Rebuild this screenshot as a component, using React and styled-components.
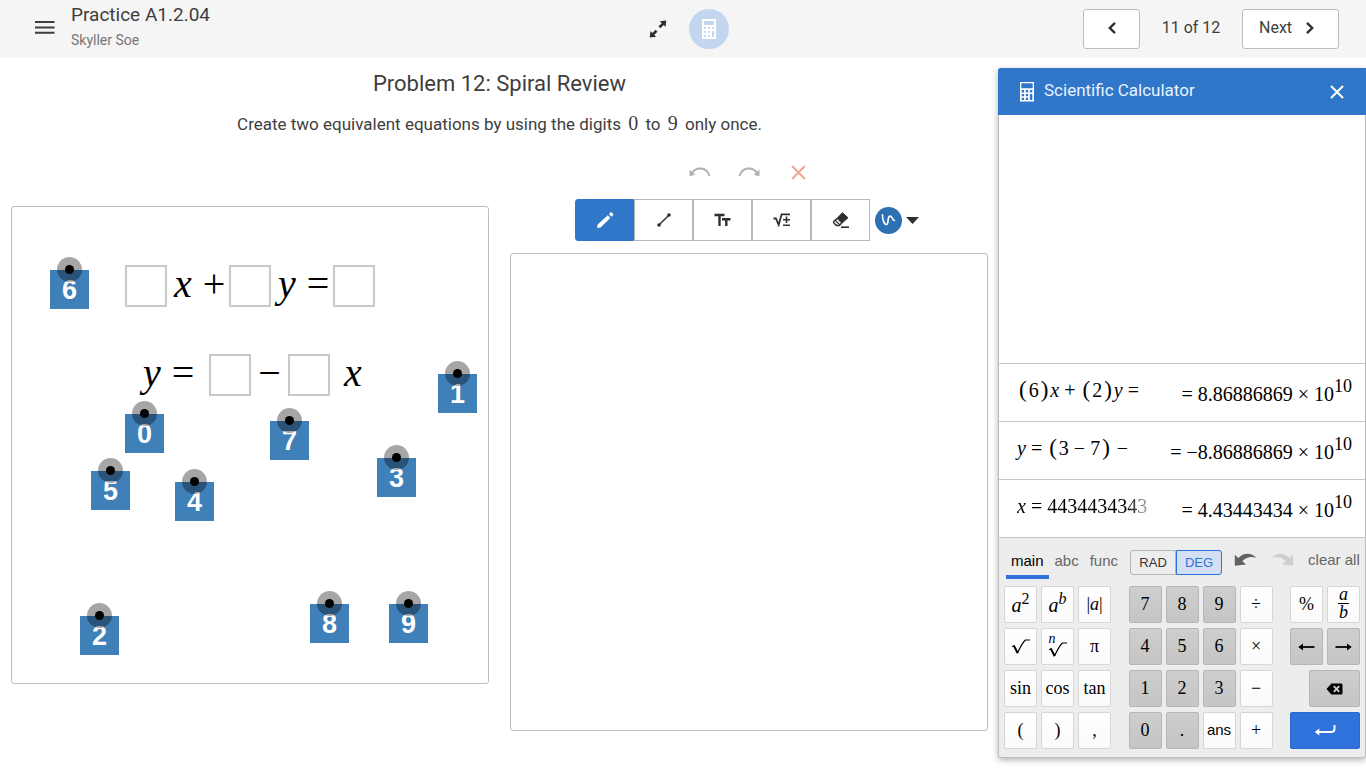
import React, { useState } from "react";
import styled, { createGlobalStyle, css } from "styled-components";

const GlobalStyle = createGlobalStyle`
  *, *::before, *::after { box-sizing: border-box; }
  body {
    margin: 0;
    background: #fff;
    color: #3e3e3e;
    font-family: Roboto, "Liberation Sans", sans-serif;
  }
  button { font: inherit; color: inherit; padding: 0; border: 0; background: none; cursor: pointer; }
  h1, h2, p { margin: 0; font-weight: 400; }
  svg { display: block; flex: none; overflow: visible; }
`;

const serif = `"Liberation Serif", serif`;
const sans = `"Liberation Sans", sans-serif`;

/* ---------- page frame ---------- */

const Page = styled.div`
  min-height: 100vh;
  display: flex;
  flex-direction: column;
`;

const TopBar = styled.header`
  display: grid;
  grid-template-columns: 1fr auto 1fr;
  align-items: center;
  height: 58px;
  padding: 0 24px 0 35px;
  background: #f5f5f5;
`;

const TopLeft = styled.div`
  display: flex;
  align-items: center;
  gap: 16px;
  height: 54px;
`;

const MenuButton = styled.button`
  padding-bottom: 3px;
`;

const Titles = styled.div`
  height: 54px;
  display: flex;
  flex-direction: column;
  gap: 4px;
  padding-top: 1px;
`;

const ActivityTitle = styled.h1`
  font-size: 19px;
  line-height: 24px;
`;

const StudentName = styled.p`
  font-size: 14px;
  line-height: 18px;
  color: #757575;
`;

const TopCenter = styled.div`
  display: flex;
  align-items: center;
  gap: 22px;
`;

const CalcToggle = styled.button`
  width: 40px;
  height: 40px;
  border-radius: 50%;
  background: #c2d6f0;
  color: #fff;
  display: grid;
  place-items: center;
`;

const Pager = styled.nav`
  display: flex;
  justify-content: flex-end;
  align-items: center;
  padding-right: 3px;
  font-size: 16px;
`;

const PageButton = styled.button`
  height: 40px;
  padding: 0 ${(p) => (p.$wide ? 24 : 0)}px 3px ${(p) => (p.$wide ? 16 : 0)}px;
  width: ${(p) => (p.$wide ? 97 : 57)}px;
  display: flex;
  align-items: center;
  justify-content: ${(p) => (p.$wide ? "space-between" : "center")};
  border: 1px solid #bdbdbd;
  border-radius: 3px;
  background: #fff;
`;

const PageCount = styled.span`
  width: 102px;
  padding-bottom: 3px;
  text-align: center;
`;

const Body = styled.div`
  flex: 1;
  display: flex;
`;

/* ---------- problem ---------- */

const Problem = styled.main`
  flex: 1;
  min-width: 0;
  padding: 14px 10px 16px 11px;
`;

const ProblemTitle = styled.h2`
  font-size: 22px;
  line-height: 24px;
  text-align: center;
`;

const Prompt = styled.p`
  margin-top: 16px;
  font-size: 17px;
  line-height: 24px;
  text-align: center;
`;

const MathDigit = styled.span`
  font-family: ${serif};
  font-size: 20px;
  line-height: 20px;
  margin: 0 3px;
`;

const Workspace = styled.div`
  display: grid;
  grid-template-columns: 1fr 1fr;
  gap: 21px;
  margin-top: 24px;
  align-items: start;
`;

const GraphColumn = styled.div`
  padding-top: 46px;
`;

const Board = styled.div`
  position: relative;
  aspect-ratio: 1;
  border: 1px solid #bdbdbd;
  border-radius: 3px;
  background: #fff;
`;

const HistoryBar = styled.div`
  display: flex;
  justify-content: center;
  gap: 25px;
  height: 24px;
`;

const PlainIconButton = styled.button`
  width: 24px;
  height: 24px;
  display: grid;
  place-items: center;
`;

const ToolBar = styled.div`
  display: flex;
  justify-content: center;
  margin: 15px 0 12px;
`;

const Tool = styled.button`
  width: 59px;
  height: 42px;
  display: grid;
  place-items: center;
  color: ${(p) => (p.$active ? "#fff" : "#2f2f2f")};
  background: ${(p) => (p.$active ? "#3077c9" : "#fff")};
  border: 1px solid ${(p) => (p.$active ? "#3077c9" : "#b8b8b8")};
  border-radius: ${(p) => (p.$active ? "3px 0 0 3px" : "0")};
`;

const ColorPicker = styled.button`
  display: flex;
  align-items: center;
  gap: 4px;
  padding: 0 4px 0 5px;
`;

const Tile = styled.button`
  position: absolute;
  left: ${(p) => p.$x}px;
  top: ${(p) => p.$y}px;
  width: 39px;
  height: 39px;
  background: #4080b8;
  color: #fff;
  font: bold 27px/40px ${sans};
  text-align: center;
  &::before, &::after {
    content: "";
    position: absolute;
    border-radius: 50%;
  }
  &::before {
    left: 7px;
    top: -13px;
    width: 25px;
    height: 25px;
    background: rgba(0, 0, 0, 0.35);
  }
  &::after {
    left: 15px;
    top: -5px;
    width: 9px;
    height: 9px;
    background: #000;
  }
`;

const Equation = styled.div`
  position: absolute;
  left: ${(p) => p.$x}px;
  top: ${(p) => p.$y}px;
  display: flex;
  align-items: center;
  height: 42px;
  font: 40px/36px ${serif};
  color: #000;
`;

const Blank = styled.span`
  width: 42px;
  height: 42px;
  border: 2px solid #c8c8c8;
`;

const Term = styled.span`
  width: ${(p) => p.$w}px;
  padding-bottom: 4px;
  text-align: center;
  font-style: ${(p) => (p.$op ? "normal" : "italic")};
`;

/* ---------- calculator ---------- */

const Calculator = styled.aside`
  width: 368px;
  margin: 10px 0 10px;
  display: flex;
  flex-direction: column;
  border: 1px solid #bdbdbd;
  border-top: 0;
  border-radius: 3px;
  background: #ededed;
  box-shadow: 0 2px 6px rgba(0, 0, 0, 0.3);
  color: #000;
`;

const CalcHeader = styled.div`
  display: flex;
  align-items: center;
  gap: 10px;
  height: 47px;
  margin: 0 -1px;
  padding: 0 22px 0 22px;
  border-radius: 3px 0 0 0;
  background: #3077c9;
  color: #fff;
`;

const CalcTitle = styled.h2`
  flex: 1;
  padding-bottom: 3px;
  font-size: 17px;
  line-height: 20px;
  color: #e8f2ff;
`;

const Tape = styled.div`
  flex: 1;
  display: flex;
  flex-direction: column;
  justify-content: flex-end;
  background: #fff;
`;

const TapeRow = styled.div`
  display: flex;
  justify-content: space-between;
  height: 58px;
  padding: 0 13px 0 18px;
  border-top: 1px solid #c6c6c6;
  font: 20px/24px ${serif};
  white-space: nowrap;
`;

const Expression = styled.div`
  padding-top: 14px;
  display: flex;
  ${(p) =>
    p.$fade &&
    css`
      color: transparent;
      background: linear-gradient(to right, #000 85%, #aaa 100%);
      background-clip: text;
    `}
`;

const Result = styled.div`
  padding-top: 18px;
  display: flex;
`;

const Op = styled.span`
  margin: 0 5px;
`;

const Power = styled.sup`
  font-size: 18px;
  line-height: 20px;
  margin-top: -6px;
`;

const Paren = styled.span`
  font-size: 23px;
  margin: 0 2px;
`;

const Keypad = styled.div`
  border-top: 1px solid #c6c6c6;
  padding: 12px 5px 8px;
  font-family: ${sans};
`;

const Controls = styled.div`
  display: flex;
  align-items: center;
  height: 29px;
  margin-bottom: 7px;
  padding: 0 2px;
  font-size: 15px;
  line-height: 22px;
  color: #666;
  white-space: nowrap;
`;

const Tab = styled.button`
  height: 29px;
  padding: 0 5px 9px;
  margin-right: 1px;
  ${(p) =>
    p.$active &&
    css`
      color: #000;
      box-shadow: inset 0 -4px #2f72dc;
    `}
`;

const AngleSwitch = styled.div`
  display: flex;
  align-self: flex-start;
  margin: 0 12px 0 6px;
`;

const AngleButton = styled.button`
  width: 46px;
  height: 25px;
  font-size: 13px;
  color: ${(p) => (p.$active ? "#2f72dc" : "#333")};
  background: ${(p) => (p.$active ? "#d3dff3" : "transparent")};
  border: 1px solid ${(p) => (p.$active ? "#2f72dc" : "#b5b5b5")};
  border-radius: ${(p) => (p.$active ? "0 3px 3px 0" : "3px 0 0 3px")};
`;

const CalcIconButton = styled.button`
  margin-right: 14px;
  padding-bottom: 9px;
`;

const ClearAll = styled.button`
  margin-left: auto;
  padding-bottom: 9px;
`;

const Keys = styled.div`
  display: flex;
  justify-content: space-between;
`;

const KeyGroup = styled.div`
  display: grid;
  grid-template-columns: repeat(${(p) => p.$cols}, 33px);
  grid-auto-rows: 37px;
  gap: 5px 4px;
`;

const Key = styled.button`
  display: flex;
  align-items: center;
  justify-content: center;
  padding-bottom: 2px;
  border: 1px solid #d6d6d6;
  border-radius: 2px;
  background: linear-gradient(#fff, #fafafa);
  color: #000;
  font: ${(p) => (p.$italic ? "italic" : "normal")} 18px/24px ${serif};
  ${(p) =>
    p.$icon &&
    css`
      padding-bottom: 0;
    `}
  ${(p) =>
    p.$label &&
    css`
      font-family: ${sans};
      font-size: 15px;
    `}
  ${(p) =>
    p.$dark &&
    css`
      background: linear-gradient(#cecece, #c5c5c5);
      border-color: #b6b6b6;
    `}
  ${(p) =>
    p.$wide &&
    css`
      grid-column: span 2;
      justify-self: end;
      width: 51px;
    `}
  ${(p) =>
    p.$enter &&
    css`
      grid-column: span 2;
      background: #2f72dc;
      border-color: #2a68cc;
      color: #fff;
    `}
`;

const KeyBase = styled.span`
  font-size: 20px;
  margin-top: 3px;
`;

const KeyPower = styled.sup`
  font-size: 16px;
  line-height: 16px;
  margin-top: -10px;
  font-style: ${(p) => (p.$upright ? "normal" : "italic")};
`;

const Bar = styled.span`
  font-style: normal;
`;

const Fraction = styled.span`
  display: flex;
  flex-direction: column;
  align-items: center;
  width: 11px;
  line-height: 16px;
`;

const Numerator = styled.span`
  width: 11px;
  border-bottom: 1px solid #000;
  line-height: 14px;
  padding-bottom: 2px;
`;

/* ---------- icons ---------- */

const MenuIcon = () => (
  <svg width="20" height="14" viewBox="0 0 20 14" stroke="#3e3e3e" strokeWidth="2">
    <path d="M0 1h19.5M0 6.400h19.5M0 11.800h19.5" />
  </svg>
);

const ExpandIcon = () => (
  <svg width="18" height="18" viewBox="0 0 18 18" fill="#2f2f2f">
    <path d="M17.300.4 10.800 1.200l2 2-3.300 3 1.800 2 3.400-3.200 1.800 1.900zM.7 17.600l6.500-.8-2-2 3.300-3-1.800-2-3.400 3.200-1.800-1.900z" />
  </svg>
);

const CalculatorIcon = ({ solid }) => (
  <svg width="14" height="20" viewBox="0 0 14 20" fill="currentColor" fillRule="evenodd">
    {solid ? (
      <path d="M0 0h14v20H0zM2 2v4h10V2zM2 8v1.800h2V8zM6 8v1.800h2V8zM10 8v1.800h2V8zM2 12v1.800h2V12zM6 12v1.800h2V12zM10 12v6h2v-6zM2 16v1.800h2V16zM6 16v1.800h2V16z" />
    ) : (
      <path d="M0 0h14v19.500H0zM1.300 1.300v4.900h11.400V1.300zM1.700 8v2.400h2.400V8zM5.800 8v2.400h2.400V8zM9.900 8v2.400h2.400V8zM1.700 11.900v2.400h2.400v-2.400zM5.800 11.900v2.400h2.400v-2.400zM9.900 11.900v6.100h2.400v-6.100zM1.700 15.700v2.300h2.400v-2.300zM5.800 15.700v2.300h2.400v-2.300z" />
    )}
  </svg>
);

const Chevron = ({ left }) => (
  <svg width="8" height="12" viewBox="0 0 8 12" fill="none" stroke="#2f2f2f" strokeWidth="2.400">
    <path d={left ? "M7 .8 1.800 6 7 11.200" : "M1 .8 6.200 6 1 11.200"} />
  </svg>
);

const CrossIcon = ({ size, color, weight }) => (
  <svg width={size} height={size} viewBox="0 0 14 14" stroke={color} strokeWidth={weight}>
    <path d="M1 1l12 12M13 1 1 13" />
  </svg>
);

const ArcArrow = ({ forward }) => (
  <svg width="22" height="10" viewBox="0 0 22 10">
    <g transform={forward ? "translate(22 0) scale(-1 1)" : undefined}>
      <path d="M2.800 6C7.500-.6 17.500-.4 20.500 9" fill="none" stroke="#b0b0b0" strokeWidth="2" />
      <path d="M.4 2.800 6.300 7.800.6 9.200z" fill="#b0b0b0" />
    </g>
  </svg>
);

const PencilIcon = () => (
  <svg width="18" height="18" viewBox="0 0 18 18" fill="currentColor">
    <path d="M1.200 17 1.500 13.700 11.800 4.200l2.500 2.800-9.700 9.500zM12.900 3.100l1.600-1.500c.5-.4 1-.4 1.400 0l1.100 1.200c.4.4.4 1 0 1.400l-1.500 1.500z" />
  </svg>
);

const LineIcon = () => (
  <svg width="14" height="14" viewBox="0 0 14 14" fill="currentColor">
    <path d="M2 12 12 2" stroke="currentColor" strokeWidth="1.500" />
    <circle cx="2" cy="12" r="1.800" />
    <circle cx="12" cy="2" r="1.800" />
  </svg>
);

const TextIcon = () => (
  <svg width="17" height="14" viewBox="0 0 17 14" fill="none" stroke="currentColor" strokeWidth="2.400">
    <path d="M.5 2h10M5.500 2v11M8 6.200h8.500M12.300 6.200V13" />
  </svg>
);

const RootIcon = () => (
  <svg width="18" height="14" viewBox="0 0 18 14" fill="none" stroke="currentColor">
    <path d="M.5 5.500h2.400l2.800 6.300L8.600 1.300h8.400" strokeWidth="1.800" />
    <path d="M10 6.700h7M13.500 3.400v6.500M10 12.200h7" strokeWidth="1.600" />
  </svg>
);

const EraserIcon = () => (
  <svg width="18" height="18" viewBox="0 0 18 18" fill="none" stroke="currentColor">
    <path d="M10.500 1.700 16 6.800 9.800 12.300 5 7.300z" fill="currentColor" />
    <path d="M5 7.600 2.200 10c-.8.700-.8 1.500-.1 2.200l2.300 2.200h2.800l2.400-2.200" strokeWidth="1.500" />
    <path d="M3.500 9.500 7.500 13.600" strokeWidth="1.300" />
    <path d="M9 16.200h8" strokeWidth="1.600" />
  </svg>
);

const SquiggleIcon = () => (
  <svg width="27" height="27" viewBox="0 0 27 27">
    <circle cx="13.500" cy="13.500" r="13.500" fill="#2d70b3" />
    <path d="M7.500 7.800c-.2 4 1.500 9.700 4 9.700 2.600 0 .3-7.200 3.200-8.300 2.800-1 2.600 4.600 4.800 4.300" fill="none" stroke="#fff" strokeWidth="1.600" strokeLinecap="round" />
  </svg>
);

const CaretIcon = () => (
  <svg width="13" height="7" viewBox="0 0 13 7" fill="#2f2f2f">
    <path d="M0 0h13L6.500 7z" />
  </svg>
);

const CurveArrow = ({ forward }) => (
  <svg width="23" height="14" viewBox="0 0 23 14" fill={forward ? "#cfcfcf" : "#626262"}>
    <path
      transform={forward ? "translate(23 0) scale(-1 1)" : undefined}
      d="M.8 1.800.8 12.700 12 11.600 8.300 8.300C11.200 4.700 16.500 2.700 22.300 4.700 17.300-.8 9.200-.4 4.300 5z"
    />
  </svg>
);

const SqrtIcon = ({ nth }) => (
  <svg width="24" height="24" viewBox="0 0 24 24" fill="none" stroke="#000">
    <g transform={nth ? "translate(0 3)" : undefined}>
      <path d="M3 11.800 5 10.500" strokeWidth="1" />
      <path d="M4.800 10.500 8.600 18" strokeWidth="2" />
      <path d="M8.300 18.300C11 13 13 8 16.500 5h4.500" strokeWidth="1.200" />
    </g>
  </svg>
);

const RootKeyFace = styled.span`
  display: grid;
  & > * { grid-area: 1 / 1; }
`;

const RootIndex = styled.span`
  font: italic 14px/8px ${serif};
  padding-left: 3px;
  text-align: left;
`;

const KeyArrow = ({ right }) => (
  <svg width="17" height="8" viewBox="0 0 17 8">
    <g transform={right ? "translate(17 0) scale(-1 1)" : undefined}>
      <path d="M3 4h13.500" stroke="#000" strokeWidth="1.800" />
      <path d="M.3 4 5 .5v7z" />
    </g>
  </svg>
);

const BackspaceIcon = () => (
  <svg width="17" height="12" viewBox="0 0 17 12">
    <path d="M5.400.5H15c.9 0 1.500.5 1.500 1.500v8c0 1-.6 1.500-1.500 1.500H5.400L.5 6z" />
    <path d="M7.800 3.200l5.400 5.600M13.200 3.200 7.800 8.800" stroke="#d0d0d0" strokeWidth="1.900" />
  </svg>
);

const EnterIcon = () => (
  <svg width="22" height="13" viewBox="0 0 22 13" fill="none" stroke="#fff">
    <path d="M20.500 1v3.500c0 2.800-1 3.500-3.500 3.500H4" strokeWidth="1.900" />
    <path d="M.8 8 5.300 4.500v7z" fill="#fff" stroke="none" />
  </svg>
);

/* ---------- content ---------- */

const tiles = [
  ["6", 38, 63],
  ["1", 426, 167],
  ["0", 113, 207],
  ["7", 258, 214],
  ["3", 365, 251],
  ["5", 79, 264],
  ["4", 163, 275],
  ["2", 68, 409],
  ["8", 298, 397],
  ["9", 377, 397],
];

const Times = ({ mantissa }) => (
  <Result>
    <Op>=</Op>{mantissa}
    <Op>×</Op>10<Power>10</Power>
  </Result>
);

export default function App() {
  const [tool, setTool] = useState("Pencil");
  const [tab, setTab] = useState("main");
  const tools = [
    ["Pencil", <PencilIcon />],
    ["Line", <LineIcon />],
    ["Text", <TextIcon />],
    ["Math", <RootIcon />],
    ["Eraser", <EraserIcon />],
  ];

  return (
    <Page>
      <GlobalStyle />
      <TopBar>
        <TopLeft>
          <MenuButton aria-label="Menu"><MenuIcon /></MenuButton>
          <Titles>
            <ActivityTitle>Practice A1.2.04</ActivityTitle>
            <StudentName>Skyller Soe</StudentName>
          </Titles>
        </TopLeft>
        <TopCenter>
          <button aria-label="Full screen"><ExpandIcon /></button>
          <CalcToggle aria-label="Calculator"><CalculatorIcon solid /></CalcToggle>
        </TopCenter>
        <Pager>
          <PageButton aria-label="Previous"><Chevron left /></PageButton>
          <PageCount>11 of 12</PageCount>
          <PageButton $wide>Next<Chevron /></PageButton>
        </Pager>
      </TopBar>

      <Body>
        <Problem>
          <ProblemTitle>Problem 12: Spiral Review</ProblemTitle>
          <Prompt>
            Create two equivalent equations by using the digits <MathDigit>0</MathDigit> to{" "}
            <MathDigit>9</MathDigit> only once.
          </Prompt>
          <Workspace>
            <GraphColumn>
              <Board>
                <Equation $x={113} $y={58}>
                  <Blank />
                  <Term $w={32}>x</Term>
                  <Term $w={30} $op>+</Term>
                  <Blank />
                  <Term $w={32}>y</Term>
                  <Term $w={30} $op>=</Term>
                  <Blank />
                </Equation>
                <Equation $x={124} $y={147}>
                  <Term $w={32}>y</Term>
                  <Term $w={30} $op>=</Term>
                  <Term $w={11} />
                  <Blank />
                  <Term $w={37} $op>−</Term>
                  <Blank />
                  <Term $w={46}>x</Term>
                </Equation>
                {tiles.map(([digit, x, y]) => (
                  <Tile key={digit} $x={x} $y={y}>{digit}</Tile>
                ))}
              </Board>
            </GraphColumn>
            <div>
              <HistoryBar>
                <PlainIconButton aria-label="Undo"><ArcArrow /></PlainIconButton>
                <PlainIconButton aria-label="Redo"><ArcArrow forward /></PlainIconButton>
                <PlainIconButton aria-label="Clear sketch">
                  <CrossIcon size={15} color="#f0a898" weight={2} />
                </PlainIconButton>
              </HistoryBar>
              <ToolBar>
                {tools.map(([name, icon]) => (
                  <Tool key={name} aria-label={name} $active={tool === name} onClick={() => setTool(name)}>
                    {icon}
                  </Tool>
                ))}
                <ColorPicker aria-label="Pen colour">
                  <SquiggleIcon />
                  <CaretIcon />
                </ColorPicker>
              </ToolBar>
              <Board />
            </div>
          </Workspace>
        </Problem>

        <Calculator>
          <CalcHeader>
            <CalculatorIcon />
            <CalcTitle>Scientific Calculator</CalcTitle>
            <button aria-label="Close"><CrossIcon size={14} color="#fff" weight={2} /></button>
          </CalcHeader>
          <Tape>
            <TapeRow>
              <Expression>
                <Paren>(</Paren>6<Paren>)</Paren><i>x</i><Op>+</Op>
                <Paren>(</Paren>2<Paren>)</Paren><i>y</i><Op>=</Op>
              </Expression>
              <Times mantissa="8.86886869" />
            </TapeRow>
            <TapeRow>
              <Expression>
                <i>y</i><Op>=</Op><Paren>(</Paren>3<Op>−</Op>7<Paren>)</Paren><Op>−</Op>
              </Expression>
              <Times mantissa="−8.86886869" />
            </TapeRow>
            <TapeRow>
              <Expression $fade>
                <i>x</i><Op>=</Op>4434434343
              </Expression>
              <Times mantissa="4.43443434" />
            </TapeRow>
          </Tape>
          <Keypad>
            <Controls>
              {["main", "abc", "func"].map((name) => (
                <Tab key={name} $active={tab === name} onClick={() => setTab(name)}>{name}</Tab>
              ))}
              <AngleSwitch>
                <AngleButton>RAD</AngleButton>
                <AngleButton $active>DEG</AngleButton>
              </AngleSwitch>
              <CalcIconButton aria-label="Undo"><CurveArrow /></CalcIconButton>
              <CalcIconButton aria-label="Redo"><CurveArrow forward /></CalcIconButton>
              <ClearAll>clear all</ClearAll>
            </Controls>
            <Keys>
              <KeyGroup $cols={3}>
                <Key $italic><KeyBase>a</KeyBase><KeyPower $upright>2</KeyPower></Key>
                <Key $italic><KeyBase>a</KeyBase><KeyPower>b</KeyPower></Key>
                <Key $italic><Bar>|</Bar>a<Bar>|</Bar></Key>
                <Key $icon aria-label="Square root"><SqrtIcon /></Key>
                <Key $icon aria-label="Nth root">
                  <RootKeyFace>
                    <RootIndex>n</RootIndex>
                    <SqrtIcon nth />
                  </RootKeyFace>
                </Key>
                <Key>π</Key>
                <Key>sin</Key>
                <Key>cos</Key>
                <Key>tan</Key>
                <Key>(</Key>
                <Key>)</Key>
                <Key>,</Key>
              </KeyGroup>
              <KeyGroup $cols={4}>
                {["7", "8", "9"].map((n) => <Key $dark key={n}>{n}</Key>)}
                <Key>÷</Key>
                {["4", "5", "6"].map((n) => <Key $dark key={n}>{n}</Key>)}
                <Key>×</Key>
                {["1", "2", "3"].map((n) => <Key $dark key={n}>{n}</Key>)}
                <Key>−</Key>
                <Key $dark>0</Key>
                <Key $dark>.</Key>
                <Key $label>ans</Key>
                <Key>+</Key>
              </KeyGroup>
              <KeyGroup $cols={2}>
                <Key>%</Key>
                <Key $italic aria-label="Fraction">
                  <Fraction><Numerator>a</Numerator><span>b</span></Fraction>
                </Key>
                <Key $dark $icon aria-label="Left"><KeyArrow /></Key>
                <Key $dark $icon aria-label="Right"><KeyArrow right /></Key>
                <Key $dark $icon $wide aria-label="Backspace"><BackspaceIcon /></Key>
                <Key $icon $enter aria-label="Enter"><EnterIcon /></Key>
              </KeyGroup>
            </Keys>
          </Keypad>
        </Calculator>
      </Body>
    </Page>
  );
}
